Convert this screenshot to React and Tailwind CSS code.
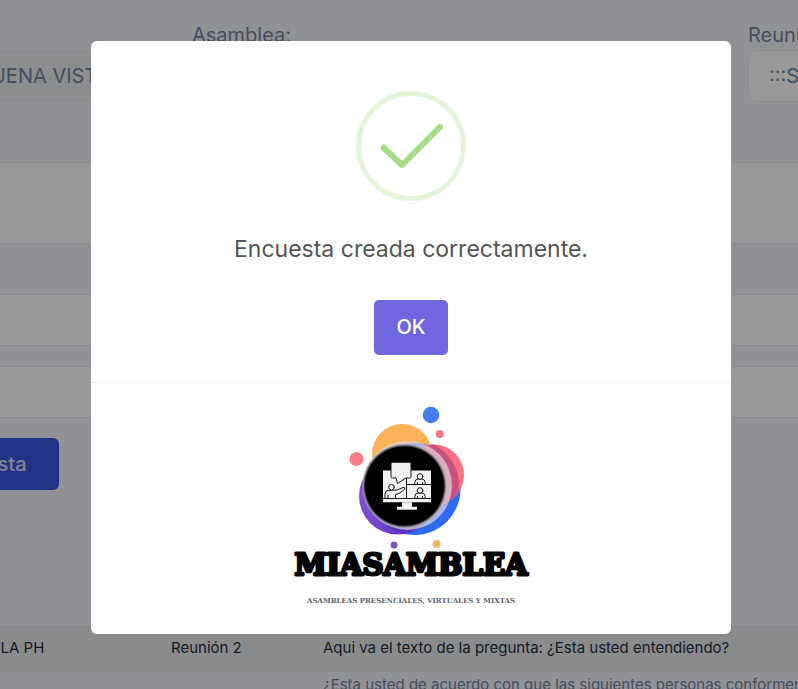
const rows = [
  {
    property: 'CONJUNTO ISABELA PH',
    meeting: 'Reunión 2',
    question: 'Aqui va el texto de la pregunta: ¿Esta usted entendiendo?',
  },
  {
    property: '',
    meeting: '',
    question: '¿Esta usted de acuerdo con que las siguientes personas conformen',
  },
];

function SuccessIcon() {
  return (
    <svg width="110" height="110" viewBox="0 0 110 110" fill="none" aria-hidden="true">
      <circle cx="55" cy="55" r="52.5" stroke="#a5dc86" strokeOpacity="0.3" strokeWidth="5" />
      <path d="M27.5 56.5 L46 74 L84 36" stroke="#a5dc86" strokeWidth="6" strokeLinecap="round" strokeLinejoin="round" />
    </svg>
  );
}

function Logo() {
  return (
    <svg width="260" height="222" viewBox="1 0 260 222" role="img" aria-label="MiAsamblea">
      <defs>
        <radialGradient id="halo" cx="124.5" cy="91" r="43" gradientUnits="userSpaceOnUse">
          <stop offset="0.91" stopColor="#000" />
          <stop offset="0.96" stopColor="#8c8790" stopOpacity="0.8" />
          <stop offset="1" stopColor="#c9c3cc" stopOpacity="0" />
        </radialGradient>
        <linearGradient id="violet" x1="0" y1="0" x2="1" y2="1">
          <stop offset="0.3" stopColor="#8150cf" />
          <stop offset="1" stopColor="#5a2fc4" />
        </linearGradient>
        <clipPath id="pinkClip">
          <circle cx="153.5" cy="80" r="30.5" />
        </clipPath>
        <clipPath id="violetClip">
          <circle cx="117.5" cy="101" r="38.5" />
        </clipPath>
      </defs>

      <circle cx="151" cy="20" r="8.3" fill="#457cf0" />
      <circle cx="159.7" cy="39" r="4" fill="#f87787" />
      <circle cx="76.5" cy="64" r="7" fill="#fb7d8b" />

      <circle cx="122" cy="59" r="30" fill="#f9b257" />
      <circle cx="134.5" cy="94" r="46" fill="#2f6bf2" />
      <circle cx="153.5" cy="80" r="30.5" fill="#fb7082" />
      <circle cx="132" cy="91" r="47" fill="#c9507f" clipPath="url(#pinkClip)" />
      <circle cx="117.5" cy="101" r="38.5" fill="url(#violet)" />
      <circle cx="134.5" cy="94" r="46" fill="#5533c5" clipPath="url(#violetClip)" />
      <circle cx="127.5" cy="90.5" r="44.5" fill="#e3d5dc" fillOpacity="0.7" />
      <circle cx="124.5" cy="91" r="43" fill="url(#halo)" />

      {/* Monitor */}
      <g fill="#f1f1f1" stroke="#161616" strokeWidth="1" strokeLinejoin="round" strokeLinecap="round">
        <path d="M103 75.5h48v31.8h-48z" stroke="none" />
        <path d="M126.5 83v20.5M126.5 89.5h24.5M103 103.5h48" />
        <path d="M122 107.3h10v4.400h5v3h-20v-3h5z" stroke="none" />
        <path d="M112.5 67.3h17q1.500 0 1.500 1.500v12.700q0 1.500-1.500 1.500h-3.500l-8.500 5.500-1.500-5.500h-3.500q-1.500 0-1.500-1.500v-12.700q0-1.500 1.500-1.500z" />
        <path d="M105 103v-4q0-3.800 4-3.800h5.500q3 0 4.500-1l4-1.700q2.500-0.500 1.800 1.500l-4.800 4-4.500 1.500v3.500M108 103v-3" fill="none" />
        <circle cx="111.5" cy="92.2" r="2.800" />
        <path d="M134.800 89v-1.500q0-3.200 3.200-3.500h4q3.200 0.300 3.200 3.500v1.500M137.500 89v-1.500M142.500 89v-1.500" fill="none" />
        <circle cx="140" cy="81.500" r="2.800" />
        <path d="M134.800 103v-1.500q0-3.200 3.200-3.500h4q3.200 0.300 3.200 3.500v1.500M137.500 103v-1.500M142.500 103v-1.500" fill="none" />
        <circle cx="140" cy="95.500" r="2.800" />
      </g>

      <text x="131" y="180" textAnchor="middle" stroke="#000" strokeWidth="3" strokeLinejoin="round" className="font-['DejaVu_Serif',serif] text-[29px] font-bold">
        MIASAMBLEA
      </text>
      <circle cx="114" cy="150" r="3.5" fill="#7f52b3" />
      <circle cx="156.5" cy="149" r="4" fill="#f3b768" />
      <text x="131" y="208" textAnchor="middle" fill="#666" className="font-['DejaVu_Serif',serif] text-[7px] font-bold">
        ASAMBLEAS PRESENCIALES, VIRTUALES Y MIXTAS
      </text>
    </svg>
  );
}

function SuccessDialog() {
  return (
    <div className="fixed inset-0 flex items-start justify-center overflow-hidden bg-black/40 pt-[41px] pl-6">
      <div role="dialog" aria-modal="true" aria-labelledby="dialog-message" className="w-full max-w-[640px] rounded-md bg-white">
        <div className="flex flex-col items-center pt-[50px] pb-[27px]">
          <SuccessIcon />
          <p id="dialog-message" className="mt-8 text-[23px] leading-8 text-[#545454]">
            Encuesta creada correctamente.
          </p>
          <button type="button" className="mt-[35px] rounded-[5px] bg-[#7066e0] px-[22px] py-3 text-xl leading-[31px] font-medium text-white">
            OK
          </button>
        </div>
        <div className="flex justify-center border-t border-[#eee] pt-3 pb-[17px]">
          <Logo />
        </div>
      </div>
    </div>
  );
}

export default function App() {
  return (
    <div className="h-screen overflow-hidden bg-[#f1f4fa] font-['Inter',sans-serif] text-xl text-[#78829a]">
      <main className="-mr-60 -ml-36 pt-5">
        <form>
          <div className="grid grid-cols-[312px_532px_1fr] gap-6">
            <div className="flex flex-col justify-end">
              <input
                aria-label="Copropiedad"
                disabled
                defaultValue="EDIFICIO BUENA VISTA"
                className="h-[52px] w-full rounded-lg bg-[#e9ecef] px-8"
              />
            </div>
            <div>
              <label htmlFor="assembly" className="block leading-[30px]">Asamblea:</label>
              <select id="assembly" className="h-[52px] w-full appearance-none rounded-lg border border-[#e6e9ee] bg-white px-5" />
            </div>
            <div>
              <label htmlFor="meeting" className="block leading-[30px]">Reunión:</label>
              <select id="meeting" className="h-[52px] w-full appearance-none rounded-lg border border-[#e6e9ee] bg-white px-5">
                <option>:::Seleccione:::</option>
              </select>
            </div>
          </div>

          <textarea aria-label="Pregunta" className="mt-[60px] block h-[82px] w-full resize-none border border-[#e6e9ee] bg-white px-5" />
          <input aria-label="Opción 1" className="mt-[50px] block h-[52px] w-full border border-[#e6e9ee] bg-white px-5" />
          <input aria-label="Opción 2" className="mt-5 block h-[52px] w-full border border-[#e6e9ee] bg-white px-5" />

          <button type="button" className="mt-5 rounded-md bg-[#3a55e0] py-[11px] pr-8 pl-6 leading-[30px] font-medium text-white/80">
            Crear encuesta
          </button>
        </form>

        <table className="mt-[135px] w-full table-fixed text-left text-[15px] leading-[22px]">
          <colgroup>
            <col className="w-[303px]" />
            <col className="w-[152px]" />
            <col />
          </colgroup>
          <tbody>
            {rows.map((row) => (
              <tr key={row.question} className="h-[47px] align-top odd:bg-[#e6e8ec] odd:align-middle odd:text-[#27303d]">
                <td className="px-3 pt-0.5 pb-1">{row.property}</td>
                <td className="px-3 pt-0.5 pb-1">{row.meeting}</td>
                <td className="px-3 pt-0.5 pb-1">{row.question}</td>
              </tr>
            ))}
          </tbody>
        </table>
      </main>
      <SuccessDialog />
    </div>
  );
}
